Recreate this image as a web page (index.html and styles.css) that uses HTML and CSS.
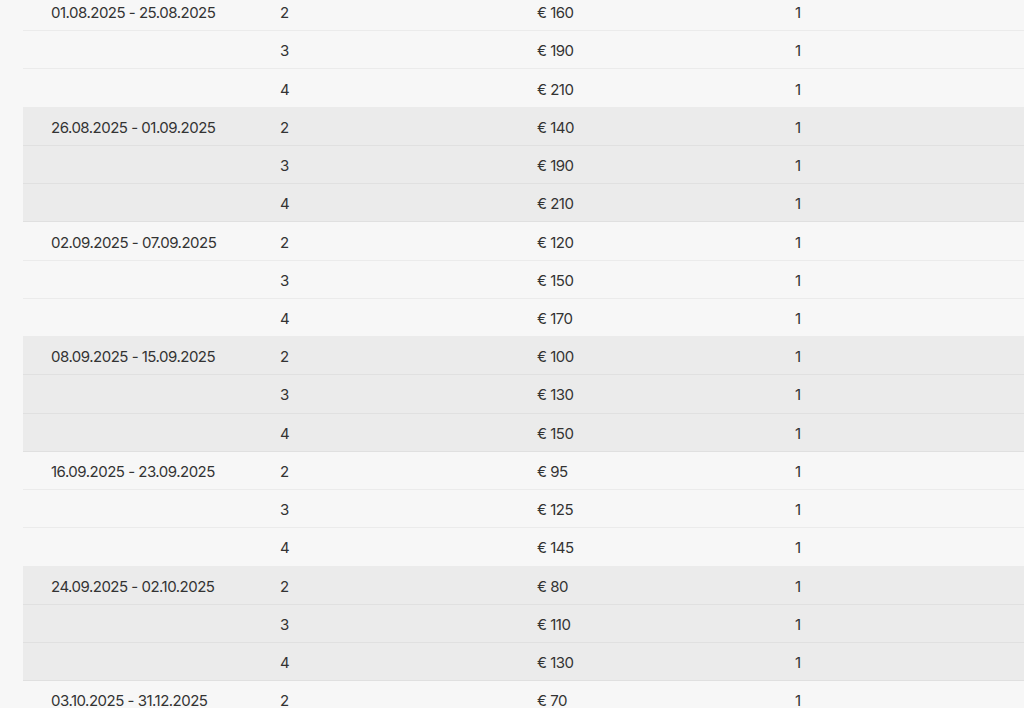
FILE: index.html
```html
<!DOCTYPE html>
<html lang="de">
<head>
<meta charset="utf-8">
<title>Preise</title>
<link rel="stylesheet" href="styles.css">
</head>
<body>
<div class="page">
  <div class="prices">
    <div class="group">
      <div class="row"><div class="cell">01.08.2025 - 25.08.2025</div><div class="cell">2</div><div class="cell">€ 160</div><div class="cell">1</div></div>
      <div class="row"><div class="cell"></div><div class="cell">3</div><div class="cell">€ 190</div><div class="cell">1</div></div>
      <div class="row"><div class="cell"></div><div class="cell">4</div><div class="cell">€ 210</div><div class="cell">1</div></div>
    </div>
    <div class="group alt">
      <div class="row"><div class="cell">26.08.2025 - 01.09.2025</div><div class="cell">2</div><div class="cell">€ 140</div><div class="cell">1</div></div>
      <div class="row"><div class="cell"></div><div class="cell">3</div><div class="cell">€ 190</div><div class="cell">1</div></div>
      <div class="row"><div class="cell"></div><div class="cell">4</div><div class="cell">€ 210</div><div class="cell">1</div></div>
    </div>
    <div class="group">
      <div class="row"><div class="cell">02.09.2025 - 07.09.2025</div><div class="cell">2</div><div class="cell">€ 120</div><div class="cell">1</div></div>
      <div class="row"><div class="cell"></div><div class="cell">3</div><div class="cell">€ 150</div><div class="cell">1</div></div>
      <div class="row"><div class="cell"></div><div class="cell">4</div><div class="cell">€ 170</div><div class="cell">1</div></div>
    </div>
    <div class="group alt">
      <div class="row"><div class="cell">08.09.2025 - 15.09.2025</div><div class="cell">2</div><div class="cell">€ 100</div><div class="cell">1</div></div>
      <div class="row"><div class="cell"></div><div class="cell">3</div><div class="cell">€ 130</div><div class="cell">1</div></div>
      <div class="row"><div class="cell"></div><div class="cell">4</div><div class="cell">€ 150</div><div class="cell">1</div></div>
    </div>
    <div class="group">
      <div class="row"><div class="cell">16.09.2025 - 23.09.2025</div><div class="cell">2</div><div class="cell">€ 95</div><div class="cell">1</div></div>
      <div class="row"><div class="cell"></div><div class="cell">3</div><div class="cell">€ 125</div><div class="cell">1</div></div>
      <div class="row"><div class="cell"></div><div class="cell">4</div><div class="cell">€ 145</div><div class="cell">1</div></div>
    </div>
    <div class="group alt">
      <div class="row"><div class="cell">24.09.2025 - 02.10.2025</div><div class="cell">2</div><div class="cell">€ 80</div><div class="cell">1</div></div>
      <div class="row"><div class="cell"></div><div class="cell">3</div><div class="cell">€ 110</div><div class="cell">1</div></div>
      <div class="row"><div class="cell"></div><div class="cell">4</div><div class="cell">€ 130</div><div class="cell">1</div></div>
    </div>
    <div class="group">
      <div class="row"><div class="cell">03.10.2025 - 31.12.2025</div><div class="cell">2</div><div class="cell">€ 70</div><div class="cell">1</div></div>
    </div>
  </div>
</div>
</body>
</html>
```

FILE: styles.css
```css
html, body {
  margin: 0;
  padding: 0;
  background: #f7f7f7;
  overflow: hidden;
}
body {
  font-family: Inter, "Noto Sans", sans-serif;
  font-size: 15px;
  color: #333333;
  letter-spacing: -0.5px;
}
.page {
  padding-left: 23px;
  margin-top: -7px;
  width: 1040px;
}
.prices {
  display: flex;
  flex-direction: column;
}
.group {
  background: #f7f7f7;
}
.group.alt {
  background: #ebebeb;
}
.row {
  display: grid;
  grid-template-columns: 229px 257px 258px 1fr;
  height: 38.24px;
  box-sizing: border-box;
  border-bottom: 1px solid #ebebeb;
  align-items: center;
}
.group.alt .row {
  border-bottom-color: #e0e0e0;
}
.cell {
  padding-left: 28px;
  padding-top: 3px;
  line-height: 20px;
}
```
